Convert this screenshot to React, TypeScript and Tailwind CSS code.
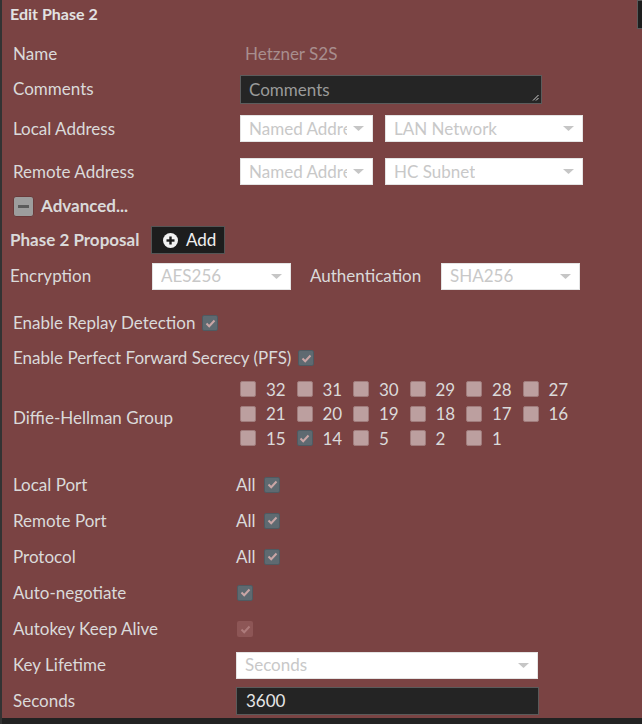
import React from 'react';

const font = { fontFamily: 'Lato, "Open Sans", sans-serif' };

function Check({ on = false, disabled = false }: { on?: boolean; disabled?: boolean }) {
  if (disabled) {
    return (
      <span className="inline-flex h-[16px] w-[16px] items-center justify-center rounded-[2px] bg-[#8d5656]">
        <svg width="11" height="9" viewBox="0 0 11 9">
          <polyline points="1.5,4.5 4.2,7.2 9.5,1.5" fill="none" stroke="#ad7b7b" strokeWidth="2" />
        </svg>
      </span>
    );
  }
  if (on) {
    return (
      <span className="inline-flex h-[16px] w-[16px] items-center justify-center rounded-[2px] border border-[#4f5a61] bg-[#5e6a71]">
        <svg width="11" height="9" viewBox="0 0 11 9">
          <polyline points="1.5,4.5 4.2,7.2 9.5,1.5" fill="none" stroke="#caa6a6" strokeWidth="2" />
        </svg>
      </span>
    );
  }
  return <span className="inline-block h-[16px] w-[16px] rounded-[2px] border border-[#a07c7c] bg-[#bc9f9f]" />;
}

function Select({ text, w }: { text: string; w: string }) {
  return (
    <div className={`flex h-[27px] ${w} items-center justify-between border border-[#e4e4e4] bg-white pl-[8px] pr-[8px]`}>
      <span className="overflow-hidden whitespace-nowrap text-[#c8c8c8]">{text}</span>
      <svg width="11" height="5" viewBox="0 0 11 5" className="ml-[6px] shrink-0">
        <polygon points="0,0 11,0 5.5,5" fill="#c6c6c6" />
      </svg>
    </div>
  );
}

const dh = [
  ['32', '31', '30', '29', '28', '27'],
  ['21', '20', '19', '18', '17', '16'],
  ['15', '14', '5', '2', '1'],
];

export default function App() {
  return (
    <div className="relative h-[724px] w-[642px] overflow-hidden border-l-2 border-[#333] bg-[#7a4343] text-[17px] text-[#dadada]" style={font}>
      {/* header */}
      <div className="flex h-[28px] items-center justify-between pl-[8px]">
        <span className="text-[16px] font-bold text-[#e2e2e2]">Edit Phase 2</span>
        <div className="mb-[-1px] h-[29px] w-[5px] self-start border border-r-0 border-[#5a5a5a] bg-[#1e1e1e]" />
      </div>

      <div className="mt-[8px] flex h-[35px] items-center pl-[11px]">
        <span className="w-[232px]">Name</span>
        <span className="text-[#a88e8e]">Hetzner S2S</span>
      </div>

      <div className="flex h-[36px] items-center pl-[11px]">
        <span className="w-[227px]">Comments</span>
        <div className="relative flex h-[29px] w-[302px] items-start border border-[#5c5c5c] bg-[#252525] pl-[8px] pt-[1px]">
          <span className="text-[#9a9a9a]">Comments</span>
          <svg width="7" height="7" viewBox="0 0 7 7" className="absolute bottom-[2px] right-[2px]">
            <line x1="1" y1="6.5" x2="6.5" y2="1" stroke="#cfcfcf" strokeWidth="1" />
            <line x1="4" y1="6.5" x2="6.5" y2="4" stroke="#cfcfcf" strokeWidth="1" />
          </svg>
        </div>
      </div>

      <div className="flex h-[43px] items-center pl-[11px]">
        <span className="w-[227px]">Local Address</span>
        <div className="flex gap-[12px]">
          <Select text="Named Address" w="w-[133px]" />
          <Select text="LAN Network" w="w-[198px]" />
        </div>
      </div>

      <div className="flex h-[43px] items-center pl-[11px]">
        <span className="w-[227px]">Remote Address</span>
        <div className="flex gap-[12px]">
          <Select text="Named Address" w="w-[133px]" />
          <Select text="HC Subnet" w="w-[198px]" />
        </div>
      </div>

      <div className="flex h-[26px] items-center pl-[11px]">
        <span className="flex h-[21px] w-[21px] items-center justify-center rounded-[3px] border border-[#6a3a3a] bg-[#9d9d9d]">
          <span className="h-[3px] w-[11px] bg-[#5b5b5b]" />
        </span>
        <span className="ml-[7px] font-bold">Advanced...</span>
      </div>

      <div className="flex h-[42px] items-center pl-[8px]">
        <span className="w-[141px] whitespace-nowrap font-bold">Phase 2 Proposal</span>
        <div className="flex h-[28px] w-[74px] items-center border border-[#555] bg-[#1d1d1d] pl-[11px]">
          <svg width="15" height="15" viewBox="0 0 15 15">
            <circle cx="7.5" cy="7.5" r="7.5" fill="#f2f2f2" />
            <rect x="3.5" y="6.3" width="8" height="2.4" fill="#1d1d1d" />
            <rect x="6.3" y="3.5" width="2.4" height="8" fill="#1d1d1d" />
          </svg>
          <span className="ml-[8px] text-[#f0f0f0]">Add</span>
        </div>
      </div>

      <div className="flex h-[30px] items-center pl-[8px]">
        <span className="w-[142px]">Encryption</span>
        <Select text="AES256" w="w-[139px]" />
        <span className="ml-[19px] w-[131px]">Authentication</span>
        <Select text="SHA256" w="w-[139px]" />
      </div>

      <div className="mt-[14px] flex h-[36px] items-center pl-[11px]">
        <span className="w-[189px] whitespace-nowrap">Enable Replay Detection</span>
        <Check on />
      </div>

      <div className="flex h-[34px] items-center pl-[11px]">
        <span className="w-[285px] whitespace-nowrap">Enable Perfect Forward Secrecy (PFS)</span>
        <Check on />
      </div>

      <div className="flex h-[91px] pl-[11px] pt-[2px]">
        <span className="flex h-[82px] w-[227px] items-center">Diffie-Hellman Group</span>
        <div className="flex flex-col">
          {dh.map((row, i) => (
            <div key={i} className="flex h-[24.5px] items-center">
              {row.map((n) => (
                <div key={n} className="flex w-[56.5px] items-center">
                  <Check on={n === '14'} />
                  <span className="ml-[10px]">{n}</span>
                </div>
              ))}
            </div>
          ))}
        </div>
      </div>

      {[['Local Port'], ['Remote Port'], ['Protocol']].map(([l]) => (
        <div key={l} className="flex h-[36px] items-center pl-[11px] pt-[1px]">
          <span className="w-[223px]">{l}</span>
          <span className="w-[28px]">All</span>
          <Check on />
        </div>
      ))}

      <div className="flex h-[36px] items-center pl-[11px] pt-[1px]">
        <span className="w-[224px]">Auto-negotiate</span>
        <Check on />
      </div>

      <div className="flex h-[37px] items-center pl-[11px] pt-[1px]">
        <span className="w-[224px]">Autokey Keep Alive</span>
        <Check disabled />
      </div>

      <div className="flex h-[36px] items-center pl-[11px]">
        <span className="w-[223px]">Key Lifetime</span>
        <Select text="Seconds" w="w-[302px]" />
      </div>

      <div className="flex h-[35px] items-center pl-[11px]">
        <span className="w-[223px]">Seconds</span>
        <div className="flex h-[28px] w-[303px] items-center border border-[#5a5a5a] bg-[#242424] pl-[9px] text-[#e6e6e6]">
          3600
        </div>
      </div>

      <div className="h-[10px] bg-[#222]" />
    </div>
  );
}
